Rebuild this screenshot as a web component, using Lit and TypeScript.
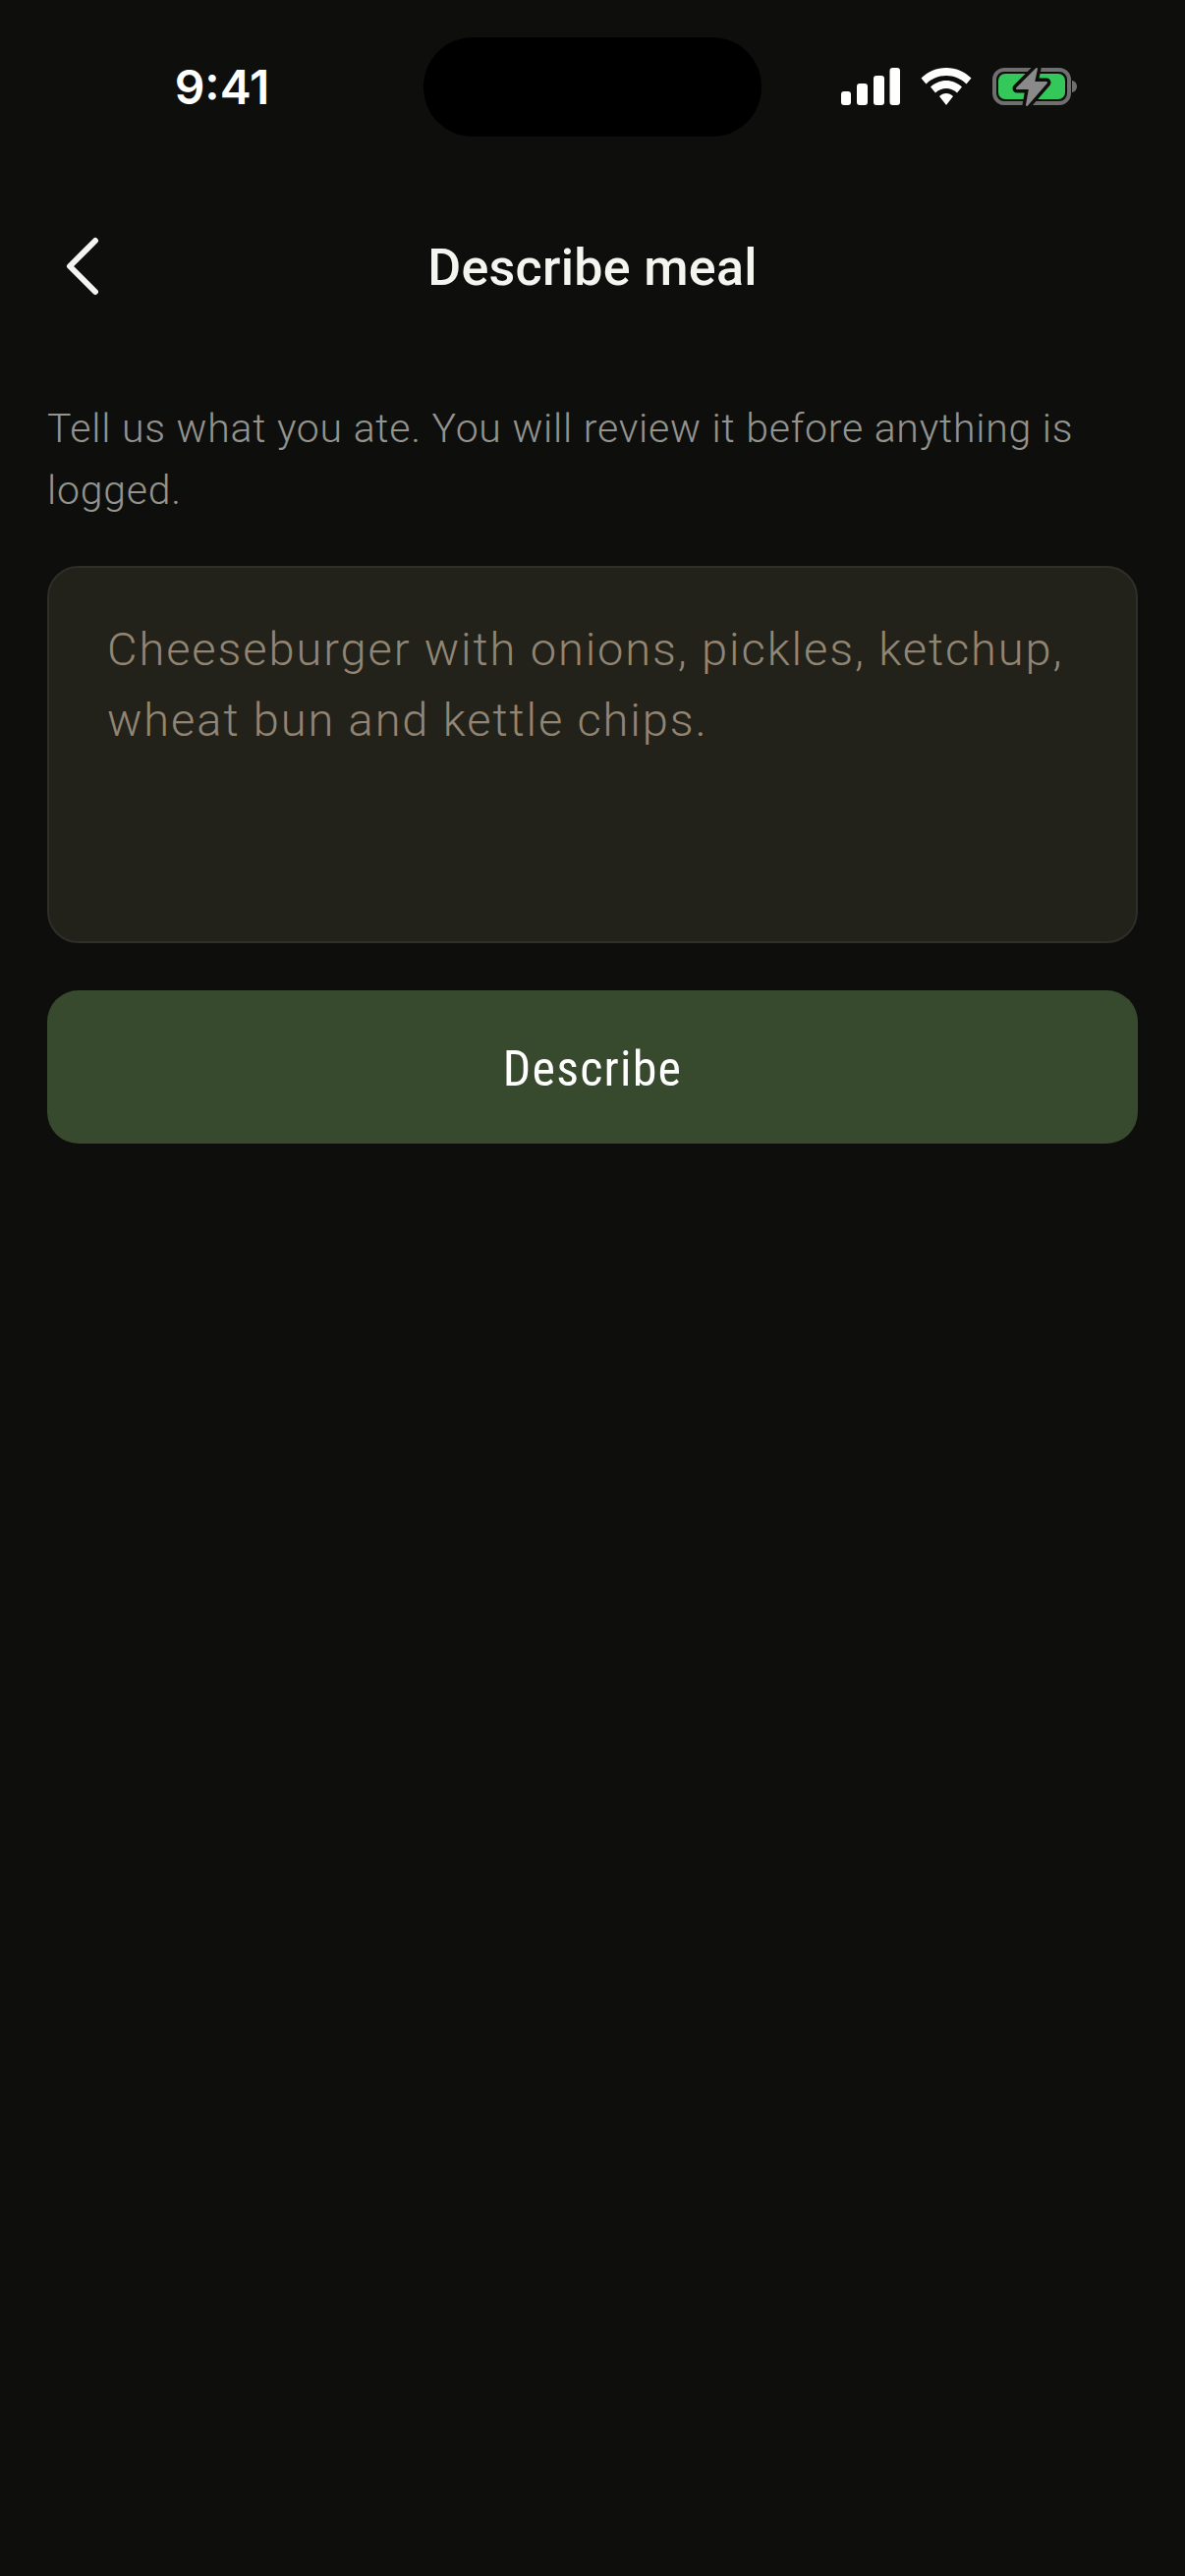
import { LitElement, html, css, svg } from "lit";
import { customElement } from "lit/decorators.js";

@customElement("app-root")
export class AppRoot extends LitElement {
  static styles = css`
    :host { display: block; width: 1206px; height: 2622px; background: #0e0f0d; overflow: hidden; font-family: Roboto, "Liberation Sans", sans-serif; }
    * { box-sizing: border-box; }
    .status { display: grid; grid-template-columns: 431px 344px 1fr; height: 139px; padding-top: 38px; }
    .time { font: 600 48px/1 Inter, sans-serif; color: #fff; display: flex; align-items: center; justify-content: center; padding: 0 0 0 21px; letter-spacing: 0; }
    .island { background: #000; border-radius: 50px; height: 101px; }
    .icons { display: flex; gap: 21px; padding: 31px 0 0 81px; align-items: flex-start; }
    .icons svg { display: block; }
    .nav { display: grid; grid-template-columns: 1fr auto 1fr; align-items: center; height: 130px; margin-top: 67px; padding-left: 65px; padding-right: 65px; }
    .back { display: block; }
    .title { font: 500 52px/60px Roboto, sans-serif; color: #f5f5f0; letter-spacing: 0.3px; margin-top: 4px; }
    .content { display: flex; flex-direction: column; padding: 69px 48px 0; }
    .desc { margin: 0; font: 300 41px/63px Roboto, sans-serif; color: #94948f; letter-spacing: 0.76px; }
    .field { display: block; width: 100%; height: 384px; margin-top: 45px; padding: 47px 59px; resize: none; outline: none; background: #22221b; border: 2px solid #2f2f29; border-radius: 32px; color: #918574; font: 300 47px/72px Roboto, sans-serif; letter-spacing: 1.9px; overflow: hidden; }
    .field::placeholder { color: #918574; opacity: 1; }
    .btn { display: flex; align-items: center; justify-content: center; height: 156px; margin-top: 48px; padding-top: 4px; border: 0; border-radius: 32px; background: #384a2e; color: #fff; font: 400 50px/1 "Roboto Condensed", Roboto, sans-serif; font-stretch: condensed; letter-spacing: 1.2px; }
  `;

  render() {
    return html`
      <div class="status">
        <div class="time">9:41</div>
        <div class="island"></div>
        <div class="icons">
          <svg width="60" height="38" viewBox="0 0 60 38" fill="#fff">
            <rect x="0" y="24" width="10" height="14" rx="3"/>
            <rect x="16" y="16" width="11" height="22" rx="3"/>
            <rect x="33" y="8" width="11" height="30" rx="3"/>
            <rect x="49.500" y="0" width="10.500" height="38" rx="3"/>
          </svg>
          <svg width="52" height="38" viewBox="0 0 52 38" fill="#fff">
            <path d="M26 0C16 0 7.500 4 0.500 10.500L5.500 16.500C11 11 18 8 26 8S41 11 46.500 16.500L51.500 10.500C44.500 4 36 0 26 0Z"/>
            <path d="M26 13C20 13 14.500 15.500 10 19.500L15 25.500C18 22.500 22 21 26 21S34 22.500 37 25.500L42 19.500C37.500 15.500 32 13 26 13Z"/>
            <path d="M26 26C23.500 26 21 27 19 29L26 38L33 29C31 27 28.500 26 26 26Z"/>
          </svg>
          <svg width="87" height="42" viewBox="0 0 87 42" style="margin-top:-2px">
            <rect x="2" y="4" width="76" height="34" rx="10" fill="none" stroke="#6f6f6f" stroke-width="4"/>
            <rect x="6" y="8" width="68" height="26" rx="7" fill="#34c759"/>
            <path d="M81 15C84 15.500 86 18 86 21S84 26.500 81 27Z" fill="#6f6f6f"/>
            <path d="M45 3L25 23H38L35 40L55 17H42Z" fill="#0e0f0d" stroke="#0e0f0d" stroke-width="9" stroke-linejoin="round"/>
            <path d="M45 3L25 23H38L35 40L55 17H42Z" fill="#8a8a8a" stroke="#8a8a8a" stroke-width="2" stroke-linejoin="round"/>
          </svg>
        </div>
      </div>
      <div class="nav">
        <svg class="back" width="38" height="60" viewBox="0 0 38 60" fill="none">
          ${svg`<path d="M32 4L6 30L32 56" stroke="#f5f5f0" stroke-width="6" stroke-linecap="round" stroke-linejoin="round"/>`}
        </svg>
        <div class="title">Describe meal</div>
        <div></div>
      </div>
      <div class="content">
        <p class="desc">Tell us what you ate. You will review it before anything is logged.</p>
        <textarea class="field" placeholder="Cheeseburger with onions, pickles, ketchup, wheat bun and kettle chips."></textarea>
        <button class="btn">Describe</button>
      </div>
    `;
  }
}
